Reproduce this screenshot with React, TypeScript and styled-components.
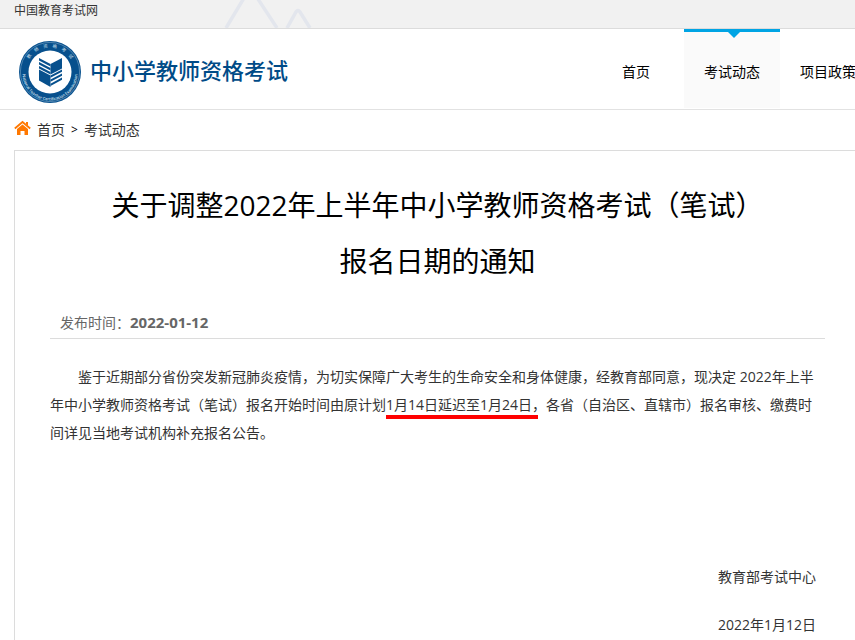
import React from "react";
import styled, { createGlobalStyle } from "styled-components";

const GlobalStyle = createGlobalStyle`
  * { box-sizing: border-box; }
  body {
    margin: 0;
    background: #fff;
    color: #333;
    font: 14px/28px "Open Sans", "Noto Sans CJK SC", sans-serif;
  }
  a { color: inherit; text-decoration: none; }
`;

const Page = styled.div`
  min-height: 100vh;
  overflow: hidden;
`;

const TopBar = styled.div`
  display: flex;
  height: 29px;
  padding-left: 14px;
  background: #f1f1f1;
  border-bottom: 1px solid #dcdcdc;
  font-size: 12px;
  line-height: 22px;
`;

const Peaks = styled.svg`
  flex: none;
  width: 100px;
  height: 28px;
  margin-left: 122px;
`;

const Header = styled.header`
  display: flex;
  justify-content: space-between;
  min-width: 876px;
  height: 81px;
  border-bottom: 1px solid #e2e2e2;
`;

const Brand = styled.a`
  display: flex;
  align-items: center;
  gap: 8px;
  padding: 5px 0 0 18px;
`;

const BrandName = styled.span`
  color: #004b87;
  font-size: 22px;
  font-weight: 500;
  padding-bottom: 3px;
  white-space: nowrap;
`;

const Emblem = styled.svg`
  width: 64px;
  height: 64px;
`;

const Nav = styled.nav`
  display: flex;
`;

const NavLink = styled.a<{ $active?: boolean }>`
  display: flex;
  flex-direction: column;
  align-items: center;
  width: 96px;
  height: 79px;
  border-top: 3px solid ${(p) => (p.$active ? "#00a4e4" : "transparent")};
  background: ${(p) => (p.$active ? "#fafafa" : "transparent")};
  color: #000;
  line-height: 68px;
`;

const Pointer = styled.span<{ $active?: boolean }>`
  border: 6px solid transparent;
  border-bottom: 0;
  border-top-color: ${(p) => (p.$active ? "#00a4e4" : "transparent")};
  margin-left: 4px;
`;

const Breadcrumb = styled.nav`
  display: flex;
  align-items: center;
  gap: 6px;
  height: 40px;
  padding-left: 14px;
`;

const HomeIcon = styled.svg`
  width: 17px;
  height: 16px;
  margin-bottom: 4px;
`;

const Separator = styled.span`
  color: #000;
  font-size: 12px;
`;

const Panel = styled.main`
  margin-left: 14px;
  padding: 26px 30px 0 35px;
  min-height: 520px;
  border: solid #dcdcdc;
  border-width: 1px 0 0 1px;
`;

const Title = styled.h1`
  margin: 0;
  color: #000;
  font-size: 28px;
  font-weight: 400;
  line-height: 56px;
  text-align: center;
`;

const Published = styled.div`
  margin-top: 19px;
  padding: 0 10px 1px;
  border-bottom: 1px solid #dcdcdc;
  color: #666;

  strong {
    font-size: 15px;
  }
`;

const Paragraph = styled.p`
  margin: 24px 0 0;
  text-indent: 28px;
`;

const Highlight = styled.span`
  margin-right: -6px;
  padding: 0 6px 1px 0;
  border-bottom: 4px solid #f00;
`;

const Signature = styled.footer`
  display: flex;
  flex-direction: column;
  align-items: flex-end;
  gap: 20px;
  margin-top: 116px;
  padding-right: 9px;
`;

const navItems = ["首页", "考试动态", "项目政策"];

function Logo() {
  return (
    <Emblem viewBox="0 0 64 64" aria-hidden="true">
      <circle cx="32" cy="32" r="31" fill="#07508d" />
      <circle cx="32" cy="32" r="29.6" fill="none" stroke="#7fa7c8" strokeWidth=".6" />
      <circle cx="32" cy="32" r="21.5" fill="#fff" />
      <g fill="#07508d">
        <path d="M21 18l11.500 6v2.500L21 20.500zM21 22l11.500 6v2.500L21 24.500zM21 26l11.500 6v2.500L21 28.500z" />
        <path d="M44 18v10.500l-11.500 6V24z" />
        <path d="M21 29.500l11.500 6V47L21 40.500z" />
        <path d="M44 29.500v2.300l-11.500 6v-2.300zM44 33.500v2.300l-11.500 6v-2.300zM44 37.500v2.300L32.500 46v-2.300z" />
      </g>
      <defs>
        <path id="emblem-top" d="M7.500 32a24.500 24.500 0 0 1 49 0" />
        <path id="emblem-bottom" d="M4.500 33a27.500 27.500 0 0 0 55 0" />
      </defs>
      <text fill="#d5e3ef" fontSize="4.500">
        <textPath href="#emblem-top" startOffset="50%" textAnchor="middle">教　师　资　格　考　试</textPath>
      </text>
      <text fill="#d5e3ef" fontSize="4" fontWeight="600">
        <textPath href="#emblem-bottom" startOffset="50%" textAnchor="middle">National Teacher Certification Examination</textPath>
      </text>
    </Emblem>
  );
}

export default function App() {
  return (
    <Page>
      <GlobalStyle />
      <TopBar>
        <a href="#">中国教育考试网</a>
        <Peaks viewBox="0 0 100 28" fill="none" stroke="#e3e6ed" strokeWidth="3.500" aria-hidden="true">
          <path d="M6 28L24 -2M36 -4L57 28M67 28L76 12Q78 9 80 12L90 28" />
        </Peaks>
      </TopBar>
      <Header>
        <Brand href="#">
          <Logo />
          <BrandName>中小学教师资格考试</BrandName>
        </Brand>
        <Nav>
          {navItems.map((item, i) => (
            <NavLink href="#" key={item} $active={i === 1}>
              <Pointer $active={i === 1} />
              {item}
            </NavLink>
          ))}
        </Nav>
      </Header>
      <Breadcrumb>
        <HomeIcon viewBox="0 0 17 16" aria-hidden="true">
          <path d="M.8 8.500L8.500 2l7.700 6.500" fill="none" stroke="#ff7800" strokeWidth="1.800" />
          <path d="M12 2h2v4l-2-2zM3 9L8.500 4.500 14 9v6h-3.500v-4h-4v4H3z" fill="#ff7800" />
        </HomeIcon>
        <a href="#">首页</a>
        <Separator>&gt;</Separator>
        <a href="#">考试动态</a>
      </Breadcrumb>
      <Panel>
        <Title>
          关于调整2022年上半年中小学教师资格考试（笔试）
          <br />
          报名日期的通知
        </Title>
        <Published>
          发布时间：<strong>2022-01-12</strong>
        </Published>
        <Paragraph>
          鉴于近期部分省份突发新冠肺炎疫情，为切实保障广大考生的生命安全和身体健康，经教育部同意，现决定 2022年上半年中小学教师资格考试（笔试）报名开始时间由原计划
          <Highlight>1月14日延迟至1月24日</Highlight>
          ，各省（自治区、直辖市）报名审核、缴费时间详见当地考试机构补充报名公告。
        </Paragraph>
        <Signature>
          <span>教育部考试中心</span>
          <time dateTime="2022-01-12">2022年1月12日</time>
        </Signature>
      </Panel>
    </Page>
  );
}
